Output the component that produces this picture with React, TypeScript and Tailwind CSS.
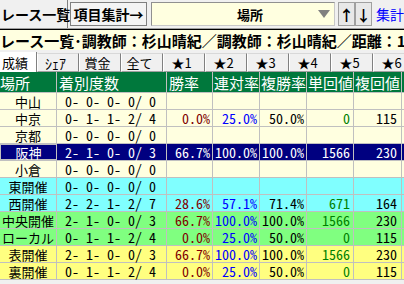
import React from "react";

type Row = {
  name: string;
  d: string;
  w?: string;
  r?: string;
  f?: string;
  t?: string;
  fk?: string;
  bg: string;
  sel?: boolean;
};

const Y = "bg-[#ffffe0]";
const C = "bg-[#80ffff]";
const G = "bg-[#80ff80]";
const YY = "bg-[#ffff80]";

const rows: Row[] = [
  { name: "中山", d: "0- 0- 0- 0/ 0", bg: Y },
  { name: "中京", d: "0- 1- 1- 2/ 4", w: "0.0%", r: "25.0%", f: "50.0%", t: "0", fk: "115", bg: Y },
  { name: "京都", d: "0- 0- 0- 0/ 0", bg: Y },
  { name: "阪神", d: "2- 1- 0- 0/ 3", w: "66.7%", r: "100.0%", f: "100.0%", t: "1566", fk: "230", bg: "bg-[#000080]", sel: true },
  { name: "小倉", d: "0- 0- 0- 0/ 0", bg: Y },
  { name: "東開催", d: "0- 0- 0- 0/ 0", bg: C },
  { name: "西開催", d: "2- 2- 1- 2/ 7", w: "28.6%", r: "57.1%", f: "71.4%", t: "671", fk: "164", bg: C },
  { name: "中央開催", d: "2- 1- 0- 0/ 3", w: "66.7%", r: "100.0%", f: "100.0%", t: "1566", fk: "230", bg: G },
  { name: "ローカル", d: "0- 1- 1- 2/ 4", w: "0.0%", r: "25.0%", f: "50.0%", t: "0", fk: "115", bg: G },
  { name: "表開催", d: "2- 1- 0- 0/ 3", w: "66.7%", r: "100.0%", f: "100.0%", t: "1566", fk: "230", bg: YY },
  { name: "裏開催", d: "0- 1- 1- 2/ 4", w: "0.0%", r: "25.0%", f: "50.0%", t: "0", fk: "115", bg: YY },
];

const jp = "font-['Noto_Sans_CJK_JP',sans-serif]";
const mono = "font-['Noto_Sans_Mono_CJK_JP','DejaVu_Sans_Mono',monospace]";

const tabs = ["ｼｪｱ", "賞金", "全て", "★1", "★2", "★3", "★4", "★5", "★6"];

export default function App() {
  return (
    <div className={`w-[404px] h-[284px] overflow-hidden bg-[#f0f0f0] ${jp} text-black`}>
      {/* top bar */}
      <div className="h-[29px] flex items-center border-b border-[#a0a0a0]">
        <div className="w-[68px] h-full flex items-center pl-[1px] font-bold text-[14px] border-r border-[#808080] leading-none whitespace-nowrap">
          レース一覧
        </div>
        <div className="ml-[2px] w-[78px] h-[24px] border border-[#808080] bg-[#f4f4f4] flex items-center justify-center font-bold text-[14px] leading-none whitespace-nowrap">
          項目集計→
        </div>
        <div className="ml-[4px] w-[186px] h-[24px] bg-[#ffffe0] border border-[#c8c8c8] border-t-[#909090] border-l-[#909090] flex items-center">
          <span className="flex-1 text-center font-bold text-[13px] leading-none pl-[30px]">場所</span>
          <svg width="12" height="8" viewBox="0 0 12 8" className="mr-[4px]">
            <polygon points="0,0 12,0 6,8" fill="#808080" />
          </svg>
        </div>
        <div className="ml-[3px] w-[17px] h-[24px] bg-[#e8e8e8] border border-[#a0a0a0] flex items-center justify-center font-bold text-[15px] leading-none">
          ↑
        </div>
        <div className="w-[17px] h-[24px] bg-[#e8e8e8] border border-[#a0a0a0] flex items-center justify-center font-bold text-[15px] leading-none">
          ↓
        </div>
        <div className="ml-[4px] text-[#0000ff] text-[14px] leading-none whitespace-nowrap">集計</div>
      </div>
      {/* title bar */}
      <div className="h-[21px] border-t border-black bg-[#ffffe0] flex items-center overflow-hidden whitespace-nowrap font-bold text-[15px] leading-none">
        レース一覧･調教師：杉山晴紀／調教師：杉山晴紀／距離：1
      </div>
      {/* tabs */}
      <div className="h-[22px] pt-[2px] flex items-end whitespace-nowrap text-[13px] leading-none">
        <div className="w-[37px] shrink-0 h-[20px] bg-white border-r border-[#808080] flex items-center justify-end pr-[8px]">
          成績
        </div>
        {tabs.map((t) => (
          <div
            key={t}
            className="w-[42px] shrink-0 h-[19px] bg-[#f0f0f0] border-l border-white border-r border-r-[#808080] border-t border-t-[#d8d8d8] border-b border-b-[#a0a0a0] flex items-center justify-center pr-[5px]"
          >
            {t === "ｼｪｱ" ? <span className={`${mono} text-[14px]`}>{t}</span> : t}
          </div>
        ))}
      </div>
      {/* header */}
      <div className="flex h-[21px] bg-[#00783c] text-white text-[15px] leading-none border-b border-[#c0c0c0]">
        <div className="w-[57px] shrink-0 border-r border-[#c0c0c0] flex items-center">場所</div>
        <div className="w-[110px] shrink-0 border-r border-[#c0c0c0] flex items-center pl-[2px]">着別度数</div>
        <div className="w-[46px] shrink-0 border-r border-[#c0c0c0] flex items-center pl-[2px]">勝率</div>
        <div className="w-[47px] shrink-0 border-r border-[#c0c0c0] flex items-center pl-[1px]">連対率</div>
        <div className="w-[47px] shrink-0 border-r border-[#c0c0c0] flex items-center pl-[1px]">複勝率</div>
        <div className="w-[47px] shrink-0 border-r border-[#c0c0c0] flex items-center pl-[1px]">単回値</div>
        <div className="w-[48px] shrink-0 border-r border-[#c0c0c0] flex items-center pl-[1px]">複回値</div>
        <div className="flex-1" />
      </div>
      {/* rows */}
      {rows.map((row) => {
        const s = row.sel;
        return (
          <div key={row.name} className={`flex h-[17px] ${row.bg} border-b border-[#c0c0c0] text-[14px] leading-none ${s ? "text-white" : ""}`}>
            <div className={`w-[57px] shrink-0 border-r border-[#c0c0c0] flex items-center justify-center whitespace-nowrap text-[13px] ${s ? "border border-[#a02020]" : ""}`}>
              {row.name}
            </div>
            <div className={`w-[110px] shrink-0 border-r border-[#c0c0c0] flex items-center pl-[8px] whitespace-pre ${mono}`}>
              {row.d}
            </div>
            <div className={`w-[46px] shrink-0 border-r border-[#c0c0c0] flex items-center justify-end pr-[2px] whitespace-pre ${mono} ${s ? "" : "text-[#800000]"}`}>
              {row.w}
            </div>
            <div className={`w-[47px] shrink-0 border-r border-[#c0c0c0] flex items-center justify-end pr-[2px] whitespace-pre ${mono} ${s ? "" : "text-[#0000ff]"}`}>
              {row.r}
            </div>
            <div className={`w-[47px] shrink-0 border-r border-[#c0c0c0] flex items-center justify-end pr-[2px] whitespace-pre ${mono}`}>
              {row.f}
            </div>
            <div className={`w-[47px] shrink-0 border-r border-[#c0c0c0] flex items-center justify-end pr-[3px] whitespace-pre ${mono} ${s ? "" : "text-[#008000]"}`}>
              {row.t}
            </div>
            <div className={`w-[48px] shrink-0 border-r border-[#c0c0c0] flex items-center justify-end pr-[4px] whitespace-pre ${mono}`}>
              {row.fk}
            </div>
            <div className="flex-1" />
          </div>
        );
      })}
    </div>
  );
}
